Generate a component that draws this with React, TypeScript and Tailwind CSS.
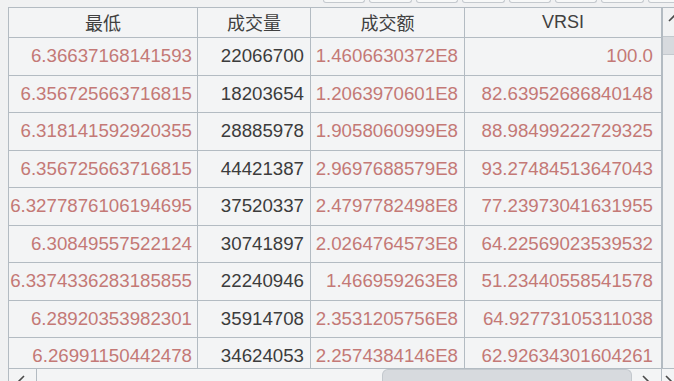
import React from 'react';

type Row = { low: string; vol: string; amount: string; vrsi: string };

const rows: Row[] = [
  { low: '6.36637168141593', vol: '22066700', amount: '1.4606630372E8', vrsi: '100.0' },
  { low: '6.356725663716815', vol: '18203654', amount: '1.2063970601E8', vrsi: '82.63952686840148' },
  { low: '6.318141592920355', vol: '28885978', amount: '1.9058060999E8', vrsi: '88.98499222729325' },
  { low: '6.356725663716815', vol: '44421387', amount: '2.9697688579E8', vrsi: '93.27484513647043' },
  { low: '6.3277876106194695', vol: '37520337', amount: '2.4797782498E8', vrsi: '77.23973041631955' },
  { low: '6.30849557522124', vol: '30741897', amount: '2.0264764573E8', vrsi: '64.22569023539532' },
  { low: '6.3374336283185855', vol: '22240946', amount: '1.466959263E8', vrsi: '51.23440558541578' },
  { low: '6.28920353982301', vol: '35914708', amount: '2.3531205756E8', vrsi: '64.92773105311038' },
  { low: '6.26991150442478', vol: '34624053', amount: '2.2574384146E8', vrsi: '62.92634301604261' },
];

const Chevron = ({ dir }: { dir: 'left' | 'right' | 'up' }) => {
  const d = dir === 'left' ? 'M7 1 L2 6 L7 11' : dir === 'right' ? 'M2 1 L7 6 L2 11' : 'M1 7 L6 2 L11 7';
  return (
    <svg width="12" height="12" viewBox="0 0 12 12" className="shrink-0">
      <path d={d} fill="none" stroke="#4a4a4a" strokeWidth="1.6" />
    </svg>
  );
};

export default function App() {
  return (
    <div className="w-[674px] h-[381px] overflow-hidden bg-[#f0f1f2] flex flex-col font-['Liberation_Sans',Arial,sans-serif]">
      {/* bottoms of the toolbar buttons above */}
      <div className="h-[7px] shrink-0 flex items-start pl-[323px] gap-[4px]">
        {Array.from({ length: 8 }).map((_, i) => (
          <div key={i} className="w-[42.4px] h-[3px] shrink-0 rounded-b-[3px] border border-t-0 border-[#c4c9ce] bg-[#f7f8f8]" />
        ))}
      </div>

      <div className="flex-1 flex flex-col ml-[8px] min-h-0">
        <div className="flex-1 flex min-h-0">
          {/* table */}
          <div className="w-[654px] shrink-0 flex flex-col border-l border-t border-[#b3bbc2] bg-[#f3f4f5] min-h-0">
            <div className="h-[29px] shrink-0 flex text-[18px] text-[#404040] font-['Noto_Sans_CJK_SC','Liberation_Sans',sans-serif]">
              <div className="w-[189px] shrink-0 border-r border-[#b3bbc2] flex items-center justify-center">最低</div>
              <div className="w-[113px] shrink-0 border-r border-[#b3bbc2] flex items-center justify-center">成交量</div>
              <div className="w-[154px] shrink-0 border-r border-[#b3bbc2] flex items-center justify-center">成交额</div>
              <div className="w-[197px] shrink-0 border-r border-[#b3bbc2] flex items-center justify-center font-['Liberation_Sans',sans-serif]">VRSI</div>
            </div>
            <div className="flex-1 overflow-hidden text-[18.7px]">
              {rows.map((r, i) => (
                <div key={i} className="h-[37.5px] flex border-t border-[#b3bbc2]">
                  <div className="w-[189px] shrink-0 border-r border-[#b3bbc2] flex items-center justify-end pr-[5px] text-[#c47976] whitespace-nowrap">{r.low}</div>
                  <div className="w-[113px] shrink-0 border-r border-[#b3bbc2] flex items-center justify-end pr-[6px] text-[#3c3c3c]">{r.vol}</div>
                  <div className="w-[154px] shrink-0 border-r border-[#b3bbc2] flex items-center justify-end pr-[6px] text-[#c47976] whitespace-nowrap">{r.amount}</div>
                  <div className="w-[197px] shrink-0 border-r border-[#b3bbc2] flex items-center justify-end pr-[8px] text-[#c47976] whitespace-nowrap">{r.vrsi}</div>
                </div>
              ))}
            </div>
          </div>

          {/* vertical scrollbar */}
          <div className="w-[16px] shrink-0 flex flex-col border-l border-t border-[#b3bbc2] bg-[#f1f2f3]">
            <div className="h-[29px] shrink-0 border-b border-[#c2c8cd] flex items-start pt-[6px] pl-[5px]">
              <Chevron dir="up" />
            </div>
            <div className="h-[18px] shrink-0 bg-[#d7dade] border-b border-[#c4c9ce]" />
            <div className="flex-1" />
          </div>
        </div>

        {/* horizontal scrollbar */}
        <div className="h-[13px] shrink-0 flex border-t border-[#b3bbc2] bg-[#f3f4f5] overflow-hidden">
          <div className="w-[29px] shrink-0 border-l border-r border-[#b3bbc2] flex items-start justify-center pt-[6px]">
            <Chevron dir="left" />
          </div>
          <div className="w-[345px] shrink-0" />
          <div className="w-[250px] shrink-0 rounded-t-[6px] bg-[#d7dade] border border-b-0 border-[#c3c8cd]" />
          <div className="w-[30px] shrink-0 border-r border-[#b3bbc2] flex items-start justify-center pt-[6px]">
            <Chevron dir="right" />
          </div>
          <div className="w-[16px] shrink-0 flex items-start justify-center pt-[6px]">
            <Chevron dir="right" />
          </div>
        </div>
      </div>
    </div>
  );
}
